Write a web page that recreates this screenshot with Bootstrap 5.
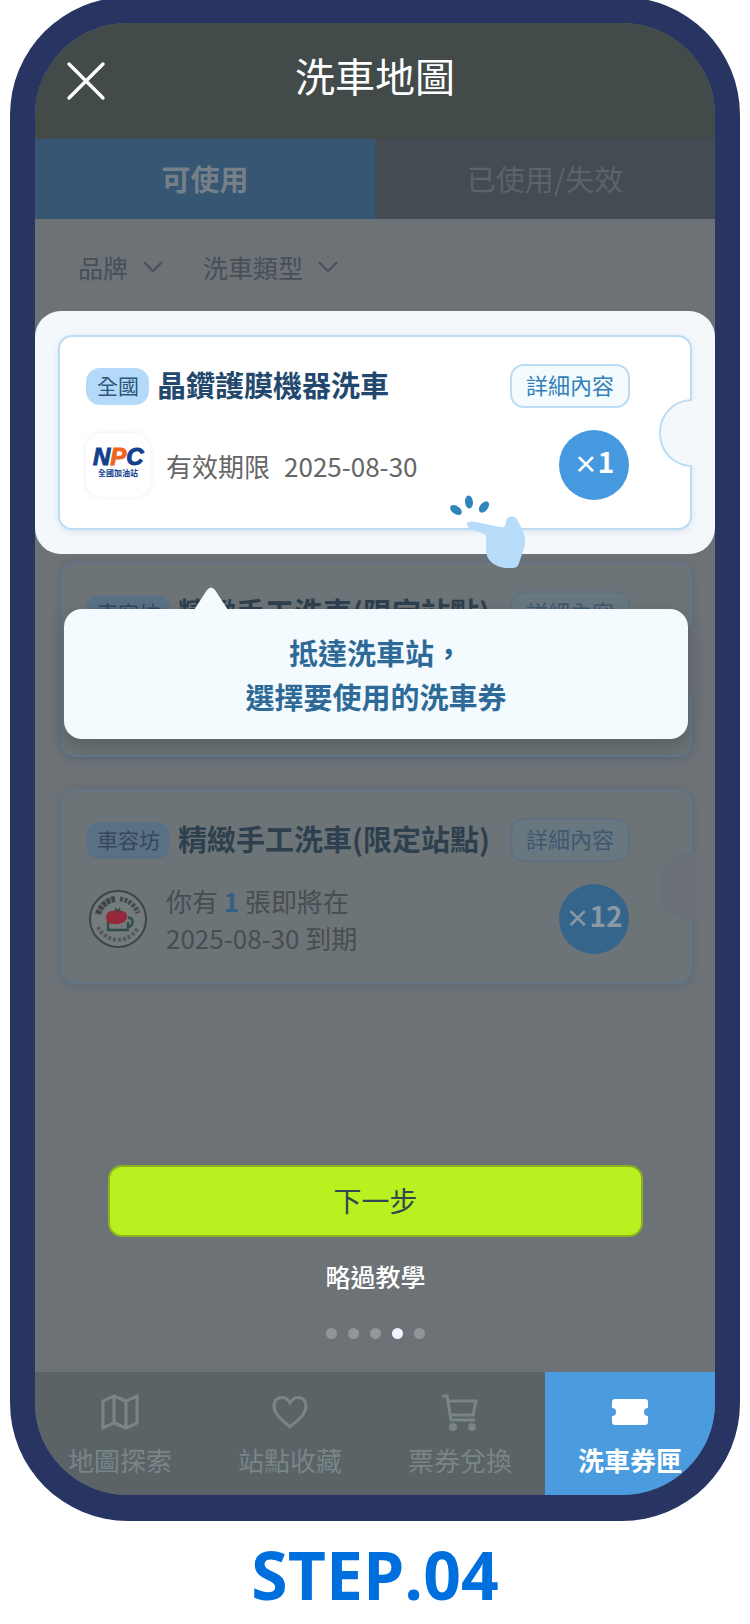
<!DOCTYPE html>
<html lang="zh-Hant">
<head>
<meta charset="utf-8">
<meta name="viewport" content="width=device-width, initial-scale=1">
<title>洗車地圖</title>
<link href="https://cdn.jsdelivr.net/npm/bootstrap@5.3.0/dist/css/bootstrap.min.css" rel="stylesheet">
<style>
  body { font-family: "Noto Sans CJK TC", sans-serif; background: #fff; overflow-x: hidden; }
  .phone { margin: -3px 10px 0; border: 26px solid #283562; border-left-width: 25px; border-right-width: 25px; border-radius: 118px; background: #6c7276; overflow: hidden; }
  .phone-head { background: #434b4a; height: 116px; padding: 0 32px 12px; display: grid; grid-template-columns: 40px 1fr 40px; align-items: center; }
  .phone-head h1 { font-size: 40px; line-height: 48px; font-weight: 400; color: #fff; }
  .close-btn { padding: 12px 0 0; margin-left: -2px; border: 0; background: none; line-height: 0; }
  .tab-item { flex: 1; height: 80px; border: 0; background: #444b53; color: #5c6369; font-size: 29px; line-height: 40px; padding: 0 0 2px; }
  .tab-item.active { background: #375673; color: #768089; font-weight: 700; }
  .filters { height: 92px; padding: 4px 43px 0; gap: 40px; }
  .filter-btn { border: 0; background: none; padding: 0; color: #484f56; font-size: 25px; line-height: 36px; display: flex; align-items: center; gap: 15px; }
  .spotlight { background: #f5f8fb; border-radius: 26px; padding: 24px 23px; position: relative; }
  .ticket { position: relative; border: 2px solid #bcdcf4; border-radius: 14px; background: #fff; padding: 27px 60px 28px 26px; box-shadow: 0 2px 6px rgba(60,110,160,.15); }
  .ticket::after { content: ""; position: absolute; right: -2px; top: 62px; width: 33px; height: 68px; border: 2px solid #bcdcf4; border-right: 0; border-radius: 34px 0 0 34px; background: #f5f8fb; box-shadow: 8px 0 0 #f5f8fb; }
  .ticket-top { height: 44px; gap: 8px; margin-bottom: 22px; }
  .ticket-body { height: 70px; gap: 16px; color: #666; font-size: 26px; line-height: 37px; }
  .valid { gap: 14px; }
  .brand-chip { background: #b5daf9; color: #2c577a; font-size: 21px; line-height: 34px; padding: 0 10px 3px 11px; border-radius: 14px; }
  .ticket-title { font-size: 29px; line-height: 40px; font-weight: 700; color: #22496d; white-space: nowrap; padding-bottom: 4px; }
  .detail-btn { border: 2px solid #bcdcf4; border-radius: 14px; background: #f4fbff; color: #3280b9; font-size: 22px; line-height: 32px; height: 44px; width: 120px; padding: 0 0 4px; }
  .logo-tile { width: 64px; height: 64px; border-radius: 16px; background: #fff; box-shadow: 0 0 6px rgba(0,0,0,.08); flex: none; }
  .count { width: 70px; height: 70px; margin-right: 1px; border-radius: 50%; background: #4699df; color: #fff; font-size: 28px; line-height: 62px; font-weight: 700; text-align: center; flex: none; }
  .count span { font-size: 24px; }
  .dimmed { margin: 8px 23px 0 26px; position: relative; }
  .dimmed .ticket { background: #6c7477; border-color: #637587; box-shadow: 0 2px 6px rgba(60,80,110,.3); padding-left: 23px; }
  .dimmed .ticket::after { background: #6b7177; border-color: #65717e; box-shadow: 8px 0 0 #6b7177; }
  .dimmed .brand-chip { background: #5a7084; color: #34485b; }
  .dimmed .ticket-title { color: #2e3f4e; }
  .dimmed .detail-btn { background: #687780; border-color: #60717f; color: #3e5870; }
  .dimmed .ticket-body { color: #484d52; }
  .dimmed .count { background: #36658c; color: #8b98a5; }
  .soon { color: #355e85; }
  .tip { position: absolute; top: 47px; left: 3px; right: 4px; z-index: 3; background: #f4fbff; border-radius: 18px; padding: 21px 16px; text-align: center; font-size: 29px; line-height: 44px; font-weight: 700; color: #2e6a98; box-shadow: 0 8px 20px rgba(0,0,0,.18); }
  .tip svg { position: absolute; left: 130px; top: -22px; }
  .hand { position: absolute; right: 189px; bottom: -16px; z-index: 2; }
  .tour { padding: 181px 72px 33px 73px; }
  .next-btn { height: 72px; border: 2px solid #8db11f; border-radius: 14px; background: #b9f01f; color: #33474e; font-size: 28px; line-height: 40px; padding: 0 0 2px; }
  .skip { color: #fff; font-size: 25px; line-height: 36px; font-weight: 500; margin: 21px 0 34px; text-decoration: none; }
  .dots { gap: 11px; }
  .dots i { width: 11px; height: 11px; border-radius: 50%; background: #91969a; }
  .dots i.on { background: #f0f5ff; }
  .bottom-item { flex: 1; height: 123px; background: #5b6367; color: #788688; text-decoration: none; font-size: 26px; line-height: 36px; padding-top: 21px; display: flex; flex-direction: column; align-items: center; gap: 11px; }
  .bottom-item.active { background: #4b9bdf; color: #fff; font-weight: 700; }
  .step { font-family: "Open Sans", "Noto Sans", sans-serif; font-size: 66px; line-height: 80px; font-weight: 700; color: #006fde; margin: 13px 0 0; text-align: center; }
</style>
</head>
<body>
<main class="phone">
  <header class="phone-head">
    <button class="close-btn" type="button" aria-label="關閉"><svg width="40" height="40" viewBox="0 0 40 40" stroke="#fff" stroke-width="3.4" stroke-linecap="round"><path d="M3 3 37 37M37 3 3 37"/></svg></button>
    <h1 class="m-0 text-center">洗車地圖</h1>
  </header>
  <div class="d-flex">
    <button class="tab-item active" type="button">可使用</button>
    <button class="tab-item" type="button">已使用/失效</button>
  </div>
  <div class="filters d-flex align-items-center">
    <button class="filter-btn" type="button">品牌 <svg width="20" height="12" viewBox="0 0 20 12" fill="none" stroke="currentColor" stroke-width="2"><path d="m1 1 9 9 9-9"/></svg></button>
    <button class="filter-btn" type="button">洗車類型 <svg width="20" height="12" viewBox="0 0 20 12" fill="none" stroke="currentColor" stroke-width="2"><path d="m1 1 9 9 9-9"/></svg></button>
  </div>

  <section class="spotlight">
    <article class="ticket">
      <div class="ticket-top d-flex align-items-center">
        <span class="brand-chip">全國</span>
        <h2 class="ticket-title m-0">晶鑽護膜機器洗車</h2>
        <button class="detail-btn ms-auto" type="button">詳細內容</button>
      </div>
      <div class="ticket-body d-flex align-items-center">
        <div class="logo-tile">
          <svg width="64" height="64" viewBox="0 0 64 64" font-weight="700"><text x="7" y="32" font-size="24" font-family="Liberation Sans, sans-serif" font-style="italic" fill="#12408c" stroke="#12408c">N<tspan fill="#ee6420" stroke="#ee6420">P</tspan>C</text><text x="12" y="43" font-size="8" fill="#12408c" font-family="Noto Sans CJK TC, sans-serif">全國加油站</text></svg>
        </div>
        <div class="valid d-flex"><span>有效期限</span><span>2025-08-30</span></div>
        <div class="count ms-auto"><span>×</span>1</div>
      </div>
    </article>
    <svg class="hand" width="76" height="76" viewBox="0 0 76 76">
      <g fill="#2f86bd"><ellipse cx="6" cy="16" rx="4" ry="6.5" transform="rotate(-55 6 16)"/><ellipse cx="19" cy="8" rx="4" ry="6.5" transform="rotate(-5 19 8)"/><ellipse cx="34" cy="13" rx="4" ry="6.5" transform="rotate(38 34 13)"/></g>
      <path fill="#b7dcfa" d="M17 31c-1-4 4-4 9-3l24 5c4 1 5 0 6-5 0-7 10-7 12-1l4 8c4 8 4 15 1 22l-4 12c-1 4-3 5-8 5-15 1-26-7-25-20v-10c0-3-1-4-4-5-6-2-14-4-15-8Z"/>
    </svg>
  </section>

  <section class="dimmed">
    <article class="ticket">
      <div class="ticket-top d-flex align-items-center">
        <span class="brand-chip">車容坊</span>
        <h2 class="ticket-title m-0">精緻手工洗車(限定站點)</h2>
        <button class="detail-btn ms-auto" type="button">詳細內容</button>
      </div>
      <div class="ticket-body"></div>
    </article>
    <div class="tip" role="tooltip">
      <svg width="34" height="23" viewBox="0 0 34 23"><path fill="#f4fbff" d="M0 23 13 3q4-5 8 0l13 20Z"/></svg>
      抵達洗車站，<br>選擇要使用的洗車券
    </div>
  </section>

  <section class="dimmed mt-0 pt-4">
    <article class="ticket mt-2">
      <div class="ticket-top d-flex align-items-center">
        <span class="brand-chip">車容坊</span>
        <h2 class="ticket-title m-0">精緻手工洗車(限定站點)</h2>
        <button class="detail-btn ms-auto" type="button">詳細內容</button>
      </div>
      <div class="ticket-body d-flex align-items-center">
        <svg class="flex-shrink-0" width="64" height="64" viewBox="0 0 64 64">
          <circle cx="32" cy="32" r="28" fill="#737b7d" stroke="#3d464a" stroke-width="2"/>
          <path d="M12 27a21 21 0 0 1 17-15" fill="none" stroke="#3f454a" stroke-width="6" stroke-dasharray="4 1"/>
          <path d="M34 12a21 21 0 0 1 18 14" fill="none" stroke="#454b50" stroke-width="5" stroke-dasharray="3 1.5"/>
          <path d="M12 40a22 22 0 0 0 40 0" fill="none" stroke="#505a5e" stroke-width="4" stroke-dasharray="3 2"/>
          <path d="M22 35v8h20v-8M42 31c6-2 6 9 0 9" fill="none" stroke="#2f4f46" stroke-width="2.4"/>
          <path d="M20 30q1-7 7-6l4-2 5 2q5 0 5 6-1 5-5 6-9 3-15-1Z" fill="#96283b"/>
          <path d="m29 21 3 4 2-4" fill="none" stroke="#2f4f46" stroke-width="1.5"/>
        </svg>
        <div>你有 <b class="soon">1</b> 張即將在<br>2025-08-30 到期</div>
        <div class="count ms-auto"><span>×</span>12</div>
      </div>
    </article>
  </section>

  <section class="tour d-flex flex-column align-items-center">
    <button class="next-btn w-100" type="button">下一步</button>
    <a class="skip" href="#">略過教學</a>
    <div class="dots d-flex"><i></i><i></i><i></i><i class="on"></i><i></i></div>
  </section>

  <nav class="d-flex">
    <a class="bottom-item" href="#"><svg width="38" height="38" viewBox="0 0 38 38" fill="none" stroke="currentColor" stroke-width="3"><path d="M2 8 13 3l12 5 11-5v27l-11 5-12-5-11 5ZM13 3v27M25 8v27"/></svg>地圖探索</a>
    <a class="bottom-item" href="#"><svg width="38" height="38" viewBox="0 0 38 38" fill="none" stroke="currentColor" stroke-width="3"><path d="M19 34C10 26 3 21 3 13c0-9 11-12 16-3 5-9 16-6 16 3 0 8-7 13-16 21Z"/></svg>站點收藏</a>
    <a class="bottom-item" href="#"><svg width="38" height="38" viewBox="0 0 38 38" fill="none" stroke="currentColor" stroke-width="3"><path d="M1 3h5l4 24h24M7 8h28l-3 14H9"/><circle cx="12" cy="34" r="3" fill="currentColor" stroke-width="2"/><circle cx="31" cy="34" r="3" fill="currentColor" stroke-width="2"/></svg>票券兌換</a>
    <a class="bottom-item active" href="#"><svg width="38" height="38" viewBox="0 0 38 38" fill="currentColor"><path d="M4 6h30q3 0 3 3v6a4 4 0 0 0 0 8v6q0 3-3 3H4q-3 0-3-3v-6a4 4 0 0 0 0-8V9q0-3 3-3Z"/></svg>洗車券匣</a>
  </nav>
</main>
<p class="step">STEP.04</p>
<script src="https://cdn.jsdelivr.net/npm/bootstrap@5.3.0/dist/js/bootstrap.bundle.min.js"></script>
</body>
</html>
